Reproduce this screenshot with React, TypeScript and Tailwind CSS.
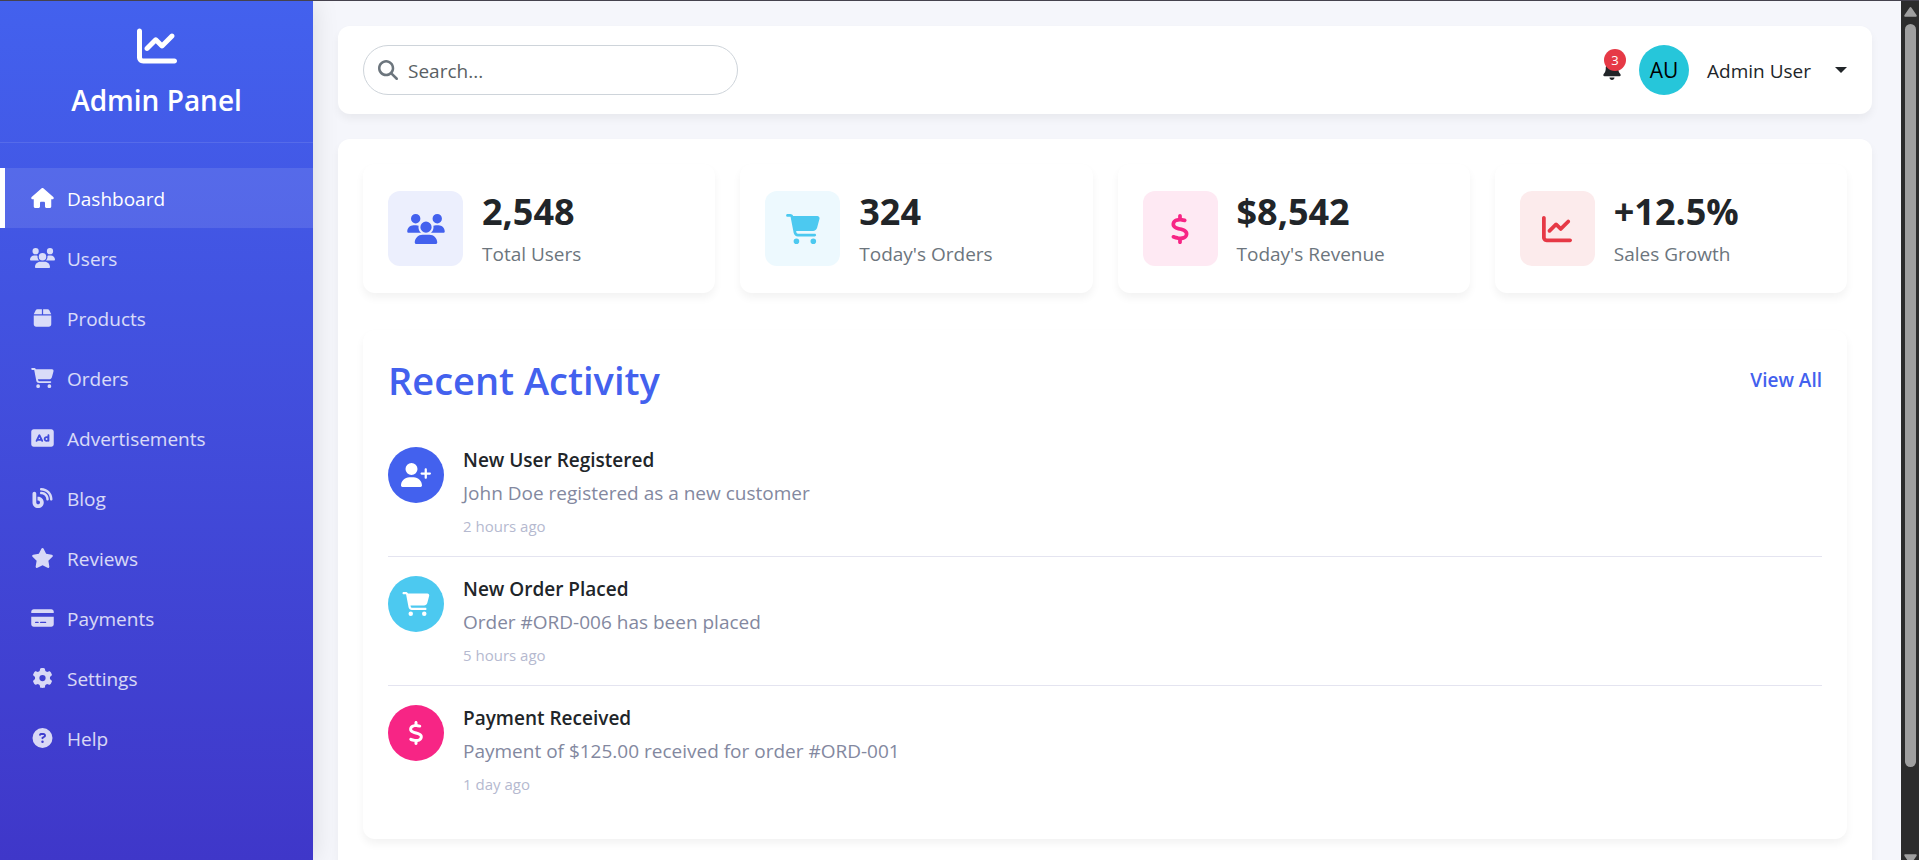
import {
  FaBell,
  FaBlog,
  FaBox,
  FaCartShopping,
  FaChartLine,
  FaCircleQuestion,
  FaCreditCard,
  FaDollarSign,
  FaGear,
  FaHouse,
  FaMagnifyingGlass,
  FaRectangleAd,
  FaStar,
  FaUserPlus,
  FaUsers,
} from "react-icons/fa6";
import type { IconType } from "react-icons";

type NavItem = { label: string; icon: IconType; active?: boolean };

const navItems: NavItem[] = [
  { label: "Dashboard", icon: FaHouse, active: true },
  { label: "Users", icon: FaUsers },
  { label: "Products", icon: FaBox },
  { label: "Orders", icon: FaCartShopping },
  { label: "Advertisements", icon: FaRectangleAd },
  { label: "Blog", icon: FaBlog },
  { label: "Reviews", icon: FaStar },
  { label: "Payments", icon: FaCreditCard },
  { label: "Settings", icon: FaGear },
  { label: "Help", icon: FaCircleQuestion },
];

const stats = [
  { value: "2,548", label: "Total Users", icon: FaUsers, tone: "bg-[#eceffd] text-[#4361ee]" },
  { value: "324", label: "Today's Orders", icon: FaCartShopping, tone: "bg-[#edf9fe] text-[#4cc9f0]" },
  { value: "$8,542", label: "Today's Revenue", icon: FaDollarSign, tone: "bg-[#fee9f3] text-[#f72585]" },
  { value: "+12.5%", label: "Sales Growth", icon: FaChartLine, tone: "bg-[#fcebec] text-[#e63946]" },
];

const activities = [
  {
    title: "New User Registered",
    text: "John Doe registered as a new customer",
    time: "2 hours ago",
    icon: FaUserPlus,
    tone: "bg-[#4361ee]",
  },
  {
    title: "New Order Placed",
    text: "Order #ORD-006 has been placed",
    time: "5 hours ago",
    icon: FaCartShopping,
    tone: "bg-[#4cc9f0]",
  },
  {
    title: "Payment Received",
    text: "Payment of $125.00 received for order #ORD-001",
    time: "1 day ago",
    icon: FaDollarSign,
    tone: "bg-[#f72585]",
  },
];

function Sidebar() {
  return (
    <aside className="z-10 w-[313px] shrink-0 bg-linear-to-b from-[#4361ee] to-[#3f37c9] text-white shadow-[0_0_25px_rgba(0,0,0,0.12)]">
      <div className="flex h-[142px] flex-col items-center border-b border-white/10 pt-[25px]">
        <FaChartLine className="size-10 shrink-0" />
        <h1 className="mt-4 text-[28px] leading-9 font-semibold">Admin Panel</h1>
      </div>
      <nav className="pt-[25px]">
        <ul>
          {navItems.map(({ label, icon: Icon, active }) => (
            <li key={label}>
              <a
                href="#"
                className={
                  active
                    ? "flex h-[60px] items-center gap-3 border-l-5 border-white bg-white/10 pl-[25px] text-white"
                    : "flex h-[60px] items-center gap-3 border-l-5 border-transparent pl-[25px] text-white/80"
                }
              >
                <Icon className="h-5 w-[25px] shrink-0" />
                <span className="pt-0.5">{label}</span>
              </a>
            </li>
          ))}
        </ul>
      </nav>
    </aside>
  );
}

function TopBar() {
  return (
    <header className="flex items-center justify-between rounded-xl bg-white px-[25px] py-[19px] shadow-[0_5px_8px_rgba(0,0,0,0.05)]">
      <label className="flex h-[50px] w-[375px] items-center gap-2.5 rounded-full border border-[#ced4da] px-3.5">
        <FaMagnifyingGlass className="size-5 shrink-0 text-[#6c757d]" />
        <input
          type="search"
          aria-label="Search"
          placeholder="Search..."
          className="w-full min-w-0 bg-transparent pt-0.5 outline-none placeholder:text-[#5a5f64]"
        />
      </label>
      <div className="flex items-center">
        <button type="button" aria-label="Notifications" className="relative mr-[18px] flex">
          <FaBell className="h-5 w-[18px]" />
          <span className="absolute -top-[11px] -right-[5px] flex size-[22px] items-center justify-center rounded-full bg-[#e63946] text-[13px] text-white">
            3
          </span>
        </button>
        <button type="button" className="flex items-center">
          <span className="flex size-[50px] items-center justify-center rounded-full bg-[#26c6da] text-[21px] text-black">
            AU
          </span>
          <span className="ml-[18px] pt-0.5">Admin User</span>
          <svg viewBox="0 0 12 6" className="ml-6 h-1.5 w-3 fill-current">
            <path d="M0 0h12L6 6z" />
          </svg>
        </button>
      </div>
    </header>
  );
}

function Stats() {
  return (
    <section className="grid grid-cols-4 gap-[25px]">
      {stats.map(({ value, label, icon: Icon, tone }) => (
        <article
          key={label}
          className="flex h-[129px] items-center gap-[19px] rounded-xl bg-white px-[25px] shadow-[0_5px_8px_rgba(0,0,0,0.05)]"
        >
          <div className={`flex size-[75px] shrink-0 items-center justify-center rounded-xl ${tone}`}>
            <Icon className="h-[30px] w-[38px]" />
          </div>
          <div className="pt-0.5">
            <h3 className="text-[36px] leading-[42px] font-bold">{value}</h3>
            <p className="mt-1.5 leading-[30px] text-[#6c757d]">{label}</p>
          </div>
        </article>
      ))}
    </section>
  );
}

function RecentActivity() {
  return (
    <section className="mt-[37px] rounded-xl bg-white p-[25px] shadow-[0_5px_8px_rgba(0,0,0,0.05)]">
      <div className="mb-6 flex items-center justify-between pt-px text-[#4361ee]">
        <h2 className="text-[38px] leading-[48px] font-semibold">Recent Activity</h2>
        <a href="#" className="font-semibold">
          View All
        </a>
      </div>
      <ul className="divide-y divide-[#e4e4f0]">
        {activities.map(({ title, text, time, icon: Icon, tone }) => (
          <li key={title} className="flex gap-[19px] pt-[19px] pb-[18px]">
            <div className={`flex size-14 shrink-0 items-center justify-center rounded-full text-white ${tone}`}>
              <Icon className="h-6 w-[30px]" />
            </div>
            <div>
              <h4 className="leading-[26px] font-semibold">{title}</h4>
              <p className="mt-[5px] leading-[30px] text-[#8388a0]">{text}</p>
              <p className="mt-1.5 text-[15px] leading-6 text-[#b5b9cf]">{time}</p>
            </div>
          </li>
        ))}
      </ul>
    </section>
  );
}

function ScrollRail() {
  return (
    <div aria-hidden="true" className="flex w-[18px] shrink-0 flex-col items-center bg-[#2c2c2c] pt-1.5">
      <svg viewBox="0 0 13 10" className="h-2.5 w-[13px] shrink-0 fill-[#9f9f9f]">
        <path d="M5.5.8a1.2 1.2 0 0 1 2 0l5 7.2c.5.8.1 1.7-.8 1.7H1.3C.4 9.7 0 8.8.5 8z" />
      </svg>
      <div className="mt-[7px] h-[743px] w-[11px] rounded-full bg-[#9f9f9f]" />
      <svg viewBox="0 0 13 10" className="mt-auto -mb-1 h-2.5 w-[13px] shrink-0 fill-[#9f9f9f]">
        <path d="M5.5 9.2a1.2 1.2 0 0 0 2 0l5-7.2c.5-.8.1-1.7-.8-1.7H1.3C.4.3 0 1.2.5 2z" />
      </svg>
    </div>
  );
}

export default function App() {
  return (
    <div className="flex h-screen overflow-hidden border-t border-[#45424e] bg-[#f5f6fb] font-['Open_Sans','Noto_Sans',sans-serif] text-[19px] leading-[30px] text-[#212529]">
      <Sidebar />
      <main className="min-w-0 flex-1 overflow-hidden py-[25px] pr-[29px] pl-[25px]">
        <TopBar />
        <div className="mt-[25px] min-h-screen rounded-xl bg-white p-[25px] shadow-[0_5px_8px_rgba(0,0,0,0.05)]">
          <Stats />
          <RecentActivity />
        </div>
      </main>
      <ScrollRail />
    </div>
  );
}
